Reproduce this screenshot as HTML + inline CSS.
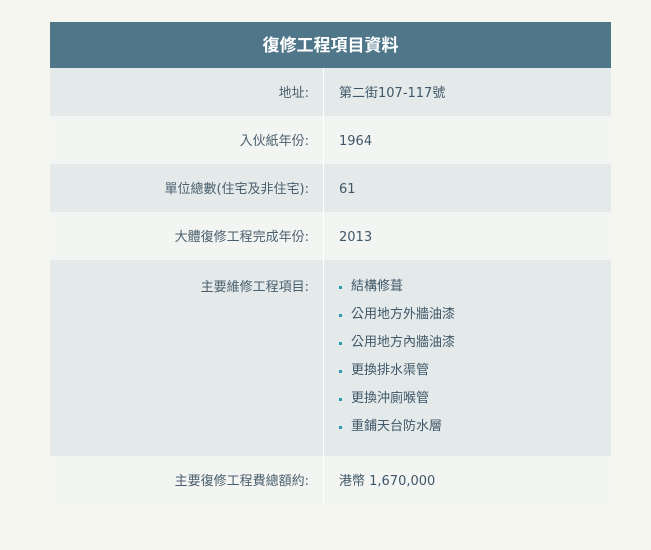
<!DOCTYPE html>
<html><head><meta charset="utf-8"><style>
body{margin:0;background:#f6f6f1;font-family:"DejaVu Sans","Noto Sans CJK TC",sans-serif;font-size:13px;color:#4a5f6e;width:651px;height:550px;position:relative;overflow:hidden}
.t{position:absolute;left:50px;top:22px;width:561px}
.h{height:46px;background:#50768a;color:#fff;font-size:17px;font-weight:bold;text-align:center;line-height:48px;font-family:"Liberation Sans","Noto Sans CJK TC",sans-serif}
.r{display:flex;height:48px}
.r:nth-child(even){background:#e4e9ea}
.r:nth-child(odd){background:#f3f5f2}
.l{width:259px;padding-right:14px;text-align:right;border-right:1px solid #fff;line-height:45px;padding-top:3px}
.v{padding-left:15px;line-height:45px;padding-top:3px;color:#3f5768}
ul{margin:0;padding:10px 0 12px;list-style:none}
li{line-height:28px;position:relative;padding-left:12px}
li:before{content:"";position:absolute;left:0;top:13px;width:3px;height:3px;background:#2a9ab5}
</style></head><body>
<div class="t">
<div class="h">復修工程項目資料</div>
<div class="r"><div class="l">地址:</div><div class="v">第二街107-117號</div></div>
<div class="r"><div class="l">入伙紙年份:</div><div class="v">1964</div></div>
<div class="r"><div class="l">單位總數(住宅及非住宅):</div><div class="v">61</div></div>
<div class="r"><div class="l">大體復修工程完成年份:</div><div class="v">2013</div></div>
<div class="r" style="height:196px"><div class="l" style="line-height:49px">主要維修工程項目:</div><div class="v" style="line-height:normal"><ul><li>結構修葺</li><li>公用地方外牆油漆</li><li>公用地方內牆油漆</li><li>更換排水渠管</li><li>更換沖廁喉管</li><li>重鋪天台防水層</li></ul></div></div>
<div class="r"><div class="l">主要復修工程費總額約:</div><div class="v">港幣 1,670,000</div></div>
</div>
</body></html>
